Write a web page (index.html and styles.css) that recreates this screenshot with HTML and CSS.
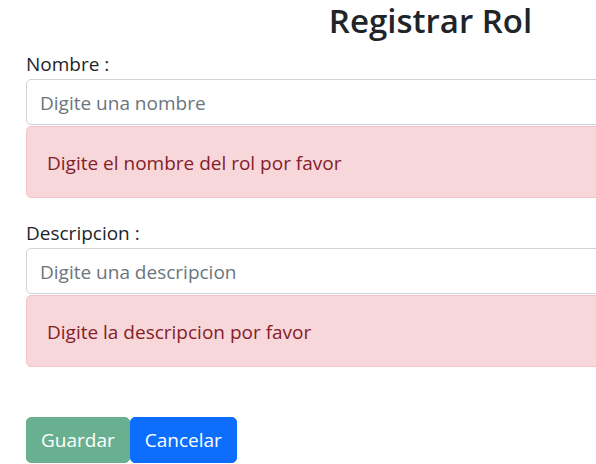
FILE: index.html
```html
<!DOCTYPE html>
<html lang="es">
<head>
<meta charset="utf-8">
<title>Registrar Rol</title>
<link rel="stylesheet" href="styles.css">
</head>
<body>
<main class="page">
  <h2 class="title">Registrar Rol</h2>
  <form class="form">
    <div class="field">
      <label class="label" for="nombre">Nombre :</label>
      <input class="control" id="nombre" type="text" placeholder="Digite una nombre">
      <div class="alert">Digite el nombre del rol por favor</div>
    </div>
    <div class="field">
      <label class="label" for="descripcion">Descripcion :</label>
      <input class="control" id="descripcion" type="text" placeholder="Digite una descripcion">
      <div class="alert">Digite la descripcion por favor</div>
    </div>
    <div class="actions">
      <button type="button" class="btn btn-success" disabled>Guardar</button>
      <button type="button" class="btn btn-primary">Cancelar</button>
    </div>
  </form>
</main>
</body>
</html>
```
FILE: styles.css
```css
html, body {
  margin: 0;
  padding: 0;
  overflow: hidden;
  background: #fff;
}
body {
  font-family: "Open Sans", "Noto Sans", sans-serif;
  font-size: 19px;
  color: #212529;
}
.page {
  width: 809px;
  padding-left: 26px;
}
.title {
  width: fit-content;
  margin: 0 auto;
  height: 50px;
  font-size: 33px;
  line-height: 40px;
  padding-top: 1px;
  box-sizing: border-box;
  font-weight: 600;
  text-align: center;
  color: #212529;
}
.form {
  display: flex;
  flex-direction: column;
}
.field {
  display: flex;
  flex-direction: column;
}
.label {
  display: block;
  height: 29px;
  line-height: 29px;
}
.control {
  box-sizing: border-box;
  height: 46px;
  padding: 2px 13px 0;
  border: 1px solid #ced4da;
  border-radius: 5px;
  font-family: inherit;
  font-size: 19px;
  color: #212529;
  background: #fff;
  outline: none;
}
.control::placeholder {
  color: #6c757d;
}
.alert {
  box-sizing: border-box;
  height: 72px;
  margin-top: 1px;
  margin-bottom: 21px;
  padding: 1px 20px 0;
  display: flex;
  align-items: center;
  background: #f8d7da;
  border: 1px solid #f5c2c7;
  border-radius: 5px;
  color: #842029;
}
.actions {
  display: flex;
  margin-top: 29px;
}
.btn {
  box-sizing: border-box;
  height: 46px;
  padding: 0 14px;
  border: 1px solid transparent;
  border-radius: 5px;
  font-family: inherit;
  font-size: 19px;
  color: #fff;
}
.btn-success {
  background: #198754;
  border-color: #198754;
  opacity: 0.65;
}
.btn-primary {
  background: #0d6efd;
  border-color: #0d6efd;
}
```
